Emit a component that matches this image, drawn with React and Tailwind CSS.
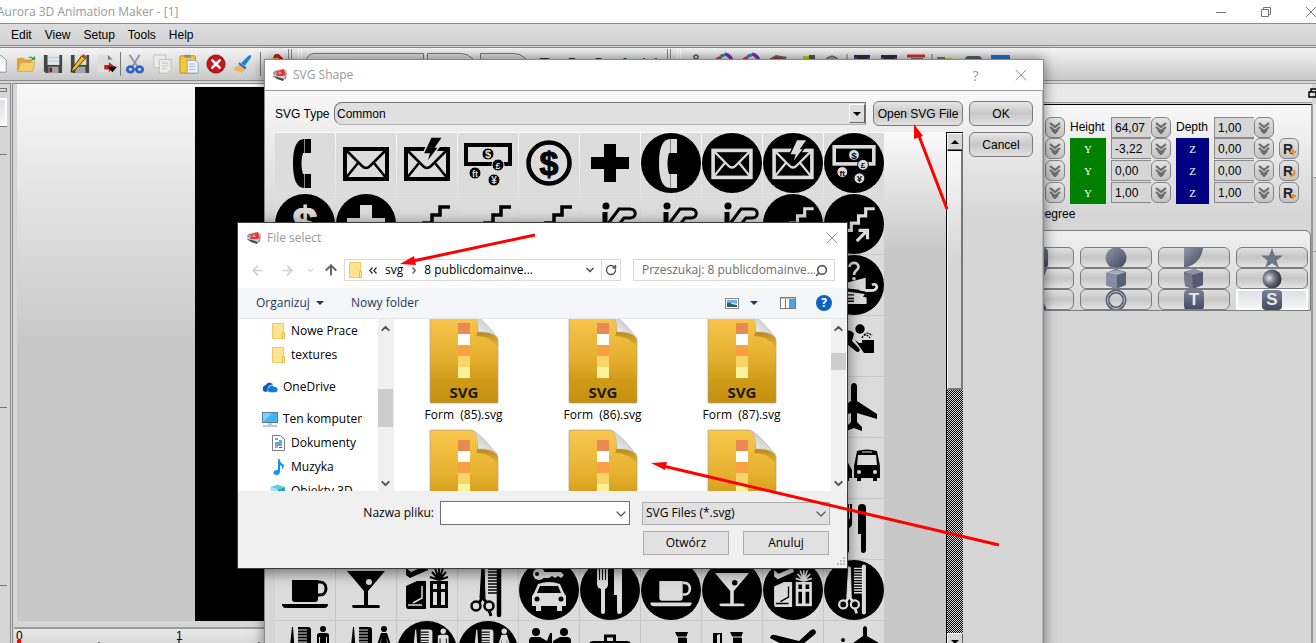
import React, { useState } from 'react';
import { ChevronDown, ChevronUp, ArrowLeft, ArrowRight, ArrowUp, RotateCw, Search, X } from 'lucide-react';

const INK = '#000000';
const PAPER = '#dcdcdc';

// 60x60 pictograms, f = figure colour, b = ground colour
const PICTOS = {
  phone: (f) => (
    <g fill={f}>
      <path d="M29 6C22 6 18 14 18 30.500C18 47 22 55 29 55V41H28C26 35 26 26 28 20H29Z" />
      <path d="M30 6H36V20H30ZM30 41H36V55H30Z" />
      <path d="M29.500 6V20M29.500 41V55" stroke="#888888" strokeWidth="1" />
    </g>
  ),
  mail: (f) => (
    <g fill="none" stroke={f}>
      <rect x="9" y="16" width="42" height="30" strokeWidth="4" />
      <path d="M9 16L26 33Q30 37 34 33L51 16M9 46L22 30M51 46L38 30" strokeWidth="2.500" />
    </g>
  ),
  flash: (f, b) => (
    <g>
      <g fill="none" stroke={f}>
        <rect x="9" y="16" width="42" height="30" strokeWidth="4" />
        <path d="M9 16L26 33Q30 37 34 33L51 16M9 46L22 30M51 46L38 30" strokeWidth="2.500" />
      </g>
      <path d="M34 4H46L39 14H42L29 31L32 21H26Z" fill={f} stroke={b} strokeWidth="1.500" />
    </g>
  ),
  money: (f, b) => (
    <g fontFamily="Liberation Sans, sans-serif" fontWeight="bold" textAnchor="middle">
      <rect x="8" y="12" width="44" height="19" fill="none" stroke={f} strokeWidth="4" />
      {[['$', 30, 21, 11], ['£', 40, 32, 9], ['ft', 17, 40, 9], ['¥', 36, 47, 10]].map(([t, x, y, s]) => (
        <g key={t}>
          <circle cx={x} cy={y} r="6" fill={f} stroke={b} strokeWidth="1" />
          <text x={x} y={y + 4} fontSize={s} fill={b}>{t}</text>
        </g>
      ))}
    </g>
  ),
  dollar: (f) => (
    <g>
      <circle cx="30" cy="30" r="20.500" fill="none" stroke={f} strokeWidth="4.500" />
      <text x="30" y="42" fontFamily="Liberation Sans, sans-serif" fontWeight="bold" fontSize="34" textAnchor="middle" fill={f} stroke={f}>$</text>
    </g>
  ),
  dollarSign: (f) => (
    <text x="30" y="46" fontFamily="Liberation Sans, sans-serif" fontWeight="bold" fontSize="46" textAnchor="middle" fill={f} stroke={f}>$</text>
  ),
  plus: (f) => <path d="M24 11H36V24H49V36H36V49H24V36H11V24H24Z" fill={f} />,
  stairs: (f) => (
    <g fill="none" stroke={f} strokeWidth="3.500">
      <path d="M53 13H43V21H35V29H27V37H19V45H8" />
      <path d="M33 49L44 38M35 37H45V47" />
    </g>
  ),
  escalator: (f) => (
    <g fill="none" stroke={f} strokeWidth="4">
      <circle cx="26" cy="12" r="3.500" fill={f} stroke="none" />
      <path d="M25 18V32" strokeWidth="5" />
      <path d="M27 31L39 15H50C57 15 57 24 50 24H44L29 43H14" strokeWidth="3" />
    </g>
  ),
  lost: (f, b) => (
    <g fill={f}>
      <path d="M25 10C25 4 35 4 35 10C35 14 30 13 30 19" fill="none" stroke={f} strokeWidth="3" />
      <circle cx="30" cy="23" r="2" />
      <path d="M4 32L43 22V38L52 37" />
      <path d="M36 36L52 36C58 33 55 27 50 30" fill="none" stroke={f} strokeWidth="3" />
      <path d="M14 36L42 40L40 43L44 44V51H18Z" />
      <path d="M12 33L42 38M22 41H30M22 45H30M22 48H30" stroke={b} strokeWidth="1.500" />
    </g>
  ),
  fountain: (f) => (
    <g fill={f}>
      <circle cx="36" cy="13" r="4.700" />
      <path d="M14 20C20 13 28 13 30 18L28 25L35 32Q37 36 33 36L24 29V36H14Z" />
      <path d="M31 24L35 27H38V24H50V37H40Z" />
      <path d="M38 22Q41 16 46 22M40 19Q44 15 48 20" fill="none" stroke={f} strokeWidth="1.300" strokeDasharray="2 1" />
    </g>
  ),
  plane: (f) => (
    <path d="M27 10Q27 6 30 6Q33 6 33 10V24L53 37V42L33 36V45L38 50V54L30 51L22 54V50L27 45V36L7 42V37L27 24Z" fill={f} />
  ),
  bus: (f, b) => (
    <g fill={f}>
      <path d="M33 13Q43 10 53 13L56 28V40H53V43H49V40H37V43H33V40H30V28Z" />
      <path d="M34 17H52L53 27H33Z" fill={b} />
      <circle cx="35" cy="34" r="2" fill={b} />
      <circle cx="51" cy="34" r="2" fill={b} />
      <path d="M38 14H48" stroke={b} />
      <path d="M5 32L9 23H23L28 32V40H25V43H22V40H10V43H6V40H4Z" />
    </g>
  ),
  cutlery: (f) => (
    <g fill={f}>
      <path d="M17 5H19V20H20V5H22V20H23V5H25V20H26V5H28V24Q28 28 25 29V52Q25 54 23 54Q21 54 21 52V29Q17 28 17 24Z" />
      <path d="M34 35V9Q34 5 38 5Q42 5 42 9V51Q42 54 39 54Q37 54 37 51V35Z" />
    </g>
  ),
  cup: (f) => (
    <g fill={f}>
      <path d="M17 20H43V39Q43 42 40 42H20Q17 42 17 39Z" />
      <path d="M43 22H45C53 22 53 35 45 35H43" fill="none" stroke={f} strokeWidth="3" />
      <path d="M7 44H53Q53 48 49 48H11Q7 48 7 44Z" />
    </g>
  ),
  martini: (f, b) => (
    <g fill={f}>
      <path d="M11 11H49L32 31V45H42Q44 45 44 47Q44 48 42 48H18Q16 48 16 46Q16 45 18 45H28V31Z" />
      <circle cx="33" cy="22" r="3" fill={b} />
    </g>
  ),
  gift: (f, b) => (
    <g fill={f}>
      <path d="M9 8L14 12L30 5L31 10L13 18L9 15Z" />
      <path d="M9 26L20 21H29V49H11Q9 49 9 45Z" />
      <path d="M25 26V38L16 43M11 45H25" fill="none" stroke={b} strokeWidth="1.500" />
      <path d="M33 21H51V48H33Z" />
      <path d="M36 24H40V29H36ZM44 24H48V29H44ZM36 32H40V45H36ZM44 32H48V45H44Z" fill={b} />
      <path d="M42 20V8M42 20L35 12M42 20L49 12M42 20L33 17M42 20L51 17M42 20L38 8M42 20L46 8" stroke={f} strokeWidth="2" />
    </g>
  ),
  scissors: (f) => (
    <g fill="none" stroke={f}>
      <path d="M24 4L22 38H27L26 5Z" fill={f} />
      <path d="M24 38L21 43M25 38L29 43M31 50L33 56" strokeWidth="3" />
      <circle cx="18" cy="46" r="4.500" strokeWidth="2.500" />
      <circle cx="31" cy="46" r="4.500" strokeWidth="2.500" />
      <path d="M41 4V55" strokeWidth="4.500" strokeLinecap="round" />
      <path d="M30 6H40M30 9H40M30 12H40M30 15H40M30 18H40M30 21H40M30 24H40M30 27H40M30 30H40M30 33H40" strokeWidth="1.500" />
    </g>
  ),
  carkey: (f, b) => (
    <g fill={f}>
      <circle cx="20" cy="14" r="6" />
      <path d="M24 12H42L45 15L42 18L39 16L36 18L33 16L30 18H24Z" />
      <circle cx="18" cy="14" r="2" fill={b} />
      <path d="M19 24Q30 20 41 24L45 33L47 36V46H43V51H38V46H22V51H17V46H13V36L15 33Z" />
      <path d="M21 26H39L42 33H18Z" fill={b} />
      <circle cx="18" cy="39" r="2.500" fill={b} />
      <circle cx="42" cy="39" r="2.500" fill={b} />
    </g>
  ),
  barber: (f, b) => (
    <g fill={f}>
      <path d="M17 6L14 34H20L18 6Z" />
      <path d="M23 6H33Q36 6 36 9V34H23Z" />
      <path d="M23 9H32M23 12H32M23 15H32M23 18H32M23 21H32" stroke={b} strokeWidth="1.200" />
      <circle cx="48" cy="8" r="3" />
      <path d="M42 14Q42 12 45 12H51Q54 12 54 14V28H52V16H51V40H45V16H44V28H42Z" />
    </g>
  ),
  salon: (f, b) => (
    <g fill={f}>
      <path d="M17 6L14 34H20L18 6Z" />
      <path d="M23 6H33Q36 6 36 9V34H23Z" />
      <path d="M23 9H32M23 12H32M23 15H32M23 18H32M23 21H32" stroke={b} strokeWidth="1.200" />
      <circle cx="48" cy="8" r="3" />
      <path d="M45 12H51L55 24L53 25L50 16L54 34H42L46 16L43 25L41 24Z" />
    </g>
  ),
  people: (f) => (
    <g fill={f}>
      <circle cx="17" cy="11" r="4" />
      <circle cx="45" cy="11" r="4" />
      <path d="M10 20Q10 16 14 16H21L28 20L31 12H33V22L22 24V40H10ZM52 20Q52 16 48 16H41L34 20V24L41 23V40H52Z" />
    </g>
  ),
  briefcase: (f) => (
    <g fill={f}>
      <path d="M25.500 20V15H34.500V20" fill="none" stroke={f} strokeWidth="3" />
      <path d="M9 24Q9 20 13 20H47Q51 20 51 24V46H9Z" />
    </g>
  ),
  officer: (f, b) => (
    <g fill={f}>
      <path d="M34 11H47L45 17H46V22Q41 28 37 22V17Z" />
      <path d="M36 16H47" stroke={b} />
      <path d="M32 28H50V50H32Z" />
    </g>
  ),
  customs: (f, b) => (
    <g fill={f}>
      <path d="M11 12H20V40H11Z" />
      <path d="M15 14L18 13V40H15Z" fill={b} />
      <path d="M28 11H41L39 17H40V22Q35 28 31 22V17Z" />
      <path d="M30 16H41" stroke={b} />
      <path d="M26 28H44V50H26Z" />
    </g>
  ),
  takeoff: (f) => (
    <path d="M7 17Q8 13 12 14L36 20L48 9Q52 7 53 11Q53 13 50 15L24 36L12 34L22 25Z" fill={f} />
  ),
  landing: (f) => (
    <g fill={f}>
      <path d="M39 7Q41 3 43 7V15L55 22V28L41 25L29 28V22L39 15Z" />
      <circle cx="19" cy="19" r="2" />
    </g>
  ),
};

// these keep their full size inside the disc
const FULL_SIZE = ['phone', 'plus', 'dollarSign', 'cutlery', 'carkey'];

// a leading "o" marks the reversed, round version
const ROWS = [
  ['phone', 'mail', 'flash', 'money', 'dollar', 'plus', 'o phone', 'o mail', 'o flash', 'o money'],
  ['o dollarSign', 'o plus', 'stairs', 'stairs', 'stairs', 'escalator', 'escalator', 'escalator', 'o stairs', 'o stairs'],
  ['o stairs', 'o escalator', 'o escalator', 'o escalator', 'lost', 'lost', 'lost', 'o lost', 'o lost', 'o lost'],
  ['fountain', 'fountain', 'o fountain', 'mail', 'phone', 'o phone', 'plus', 'o plus', 'fountain', 'fountain'],
  ['plane', 'bus', 'o plane', 'o bus', 'plane', 'bus', 'o plane', 'o bus', 'bus', 'plane'],
  ['plane', 'bus', 'o plane', 'o bus', 'plane', 'bus', 'o plane', 'o bus', 'plane', 'bus'],
  ['o bus', 'o plane', 'carkey', 'o plane', 'plane', 'bus', 'o plane', 'o bus', 'carkey', 'cutlery'],
  ['cup', 'martini', 'gift', 'scissors', 'o carkey', 'o cutlery', 'o cup', 'o martini', 'o gift', 'o scissors'],
  ['barber', 'salon', 'o barber', 'o salon', 'people', 'briefcase', 'officer', 'customs', 'takeoff', 'landing'],
];

const Picto = ({ id }) => {
  const round = id.startsWith('o ');
  const name = round ? id.slice(2) : id;
  return (
    <button type="button" aria-label={name} className="block h-[60px] w-[60px] bg-[#dcdcdc]">
      <svg viewBox="0 0 60 60" className="block h-[60px] w-[60px]">
        {round && <circle cx="30" cy="30" r="30" fill={INK} />}
        {round ? (
          <g transform={FULL_SIZE.includes(name) ? undefined : 'translate(3 3) scale(0.9)'}>{PICTOS[name](PAPER, INK)}</g>
        ) : (
          PICTOS[name](INK, PAPER)
        )}
      </svg>
    </button>
  );
};

const AppLogo = () => (
  <svg viewBox="0 0 16 16" className="h-4 w-4 shrink-0">
    <path d="M1 6L4 3L9 2L15 3L14 12L11 14L6 12L1 10Z" fill="#d4d4d4" />
    <path d="M4 9L5 4L12 2L14 8L11 9Z" fill="#e2363c" />
    <path d="M6 7L8 4L10 7Z" fill="#ff9a9d" />
    <path d="M1 6L4 3L5 5L2 8Z" fill="#8e8e8e" />
    <path d="M1 9L6 10L12 12L11 14L5 12Z" fill="#4a4a4a" />
    <path d="M13 9L15 3L14 12L12 12Z" fill="#9a9a9a" />
  </svg>
);

/* Main toolbar */

const toolIcons = {
  New: <path d="M3 2H14L19 7V20H3Z" fill="#f6f8fb" stroke="#8290a8" />,
  Open: (
    <g>
      <path d="M1 6Q1 4 3 4H8L10 6H17V19H3Q1 19 1 17Z" fill="#d9a63c" />
      <path d="M5 9H21L18 19H2Z" fill="#f7cf6b" stroke="#c99632" strokeWidth=".6" />
      <path d="M13 5Q15 1 19 4L21 2V7H16L18 5Q16 3 13 5Z" fill="#35a23a" />
    </g>
  ),
  Save: (
    <g>
      <path d="M1 1H21V21H3L1 19Z" fill="#454545" />
      <rect x="5" y="1" width="13" height="11" fill="#dfe9f0" />
      <path d="M5 4H18M5 8H18" stroke="#b8c6d0" />
      <rect x="6" y="14" width="11" height="7" fill="#a5a5a5" />
      <rect x="7" y="15" width="3" height="5" fill="#6d2020" />
    </g>
  ),
  'Save as': (
    <g>
      <path d="M1 1H21V21H3L1 19Z" fill="#454545" />
      <rect x="5" y="1" width="13" height="11" fill="#e2ddd0" />
      <rect x="6" y="14" width="11" height="7" fill="#a5a5a5" />
      <path d="M1 20L3 15L13 2L17 5L6 17Z" fill="#f0b91e" stroke="#2c2410" />
      <path d="M13 2L15 0L18 3L17 5Z" fill="#cf3329" />
    </g>
  ),
  Export: (
    <g>
      <path d="M1 1H12L17 6V20H1Z" fill="#dedede" />
      <path d="M12 1L17 6H12Z" fill="#777777" />
      <path d="M8 12H13V9L20 14L13 20V17H8Z" fill="#c01f22" />
      <path d="M12 14H22L17 20Z" fill="#000000" />
    </g>
  ),
  Cut: (
    <g fill="none">
      <path d="M5 1L14 14M16 1L8 14" stroke="#8996a6" strokeWidth="2" />
      <ellipse cx="6" cy="17" rx="3.500" ry="3" stroke="#2d62c8" strokeWidth="3" />
      <ellipse cx="16" cy="17" rx="3.500" ry="3" stroke="#2d62c8" strokeWidth="3" />
    </g>
  ),
  Copy: (
    <g fill="#ececea" stroke="#bdbdba">
      <path d="M2 1H15V15H2Z" />
      <path d="M8 6H21V17L17 21H8Z" />
      <path d="M11 10H18M11 13H18M11 16H16" />
    </g>
  ),
  Paste: (
    <g>
      <rect x="1" y="2" width="17" height="19" rx="1" fill="#f5c836" stroke="#b98a14" />
      <rect x="6" y="1" width="7" height="3" fill="#8a8a8a" />
      <path d="M9 7H18L21 10V21H9Z" fill="#eef3fb" stroke="#8ea0bc" />
      <path d="M11 11H18M11 14H18M11 17H18" stroke="#9fb4d6" />
    </g>
  ),
  Delete: (
    <g>
      <circle cx="11" cy="11" r="10" fill="#c4161c" stroke="#8e0d12" />
      <path d="M7 7L15 15M15 7L7 15" stroke="#ffffff" strokeWidth="3" strokeLinecap="round" />
    </g>
  ),
  Brush: (
    <g>
      <path d="M19 1Q21 2 19 5L13 13L9 10L17 2Z" fill="#1f7fd0" />
      <path d="M7 9L15 15L13 17L6 11Z" fill="#2d6aa8" />
      <path d="M6 12L13 17L10 21L7 19L6 21L4 18L2 19L1 16Z" fill="#f5b25c" />
    </g>
  ),
  Pencil: (
    <g>
      <path d="M11 0H15L20 5L17 8Z" fill="#c9191c" />
      <path d="M1 16L11 1L17 7L10 18Z" fill="#e9a62b" />
      <path d="M9 4L11 0L14 4Z" fill="#a31313" />
    </g>
  ),
};

const Tool = ({ name }) => (
  <button type="button" aria-label={name} className="flex h-[27px] w-[27px] shrink-0 items-center justify-center">
    <svg viewBox="0 0 22 22" className="h-[20px] w-[20px]">{toolIcons[name]}</svg>
  </button>
);

const Divider = () => <span className="h-6 w-px shrink-0 bg-[#777777]" />;

const Grip = () => (
  <span className="flex h-full shrink-0 gap-[2px] pt-px">
    <span className="w-px bg-[#8b8b8b]" />
    <span className="w-px bg-[#8b8b8b]" />
    <span className="ml-1 w-px bg-white" />
    <span className="w-px bg-white" />
  </span>
);

const MoreTools = () => (
  <svg viewBox="0 0 352 24" className="ml-1 h-6 w-[352px] shrink-0" fill="none">
    <circle cx="11" cy="5" r="2" stroke="#555555" strokeWidth="1.500" />
    <path d="M11 7V20" stroke="#555555" strokeWidth="2" />
    <path d="M31 10Q39 -3 47 8" stroke="#2a83c4" strokeWidth="3" strokeDasharray="5 2" />
    <path d="M40 2Q45 3 47 8" stroke="#7d2bb5" strokeWidth="3" />
    <path d="M31 8L36 5" stroke="#cf4343" strokeWidth="3" />
    <path d="M58 10Q66 -3 74 8" stroke="#2a83c4" strokeWidth="3" strokeDasharray="5 2" />
    <path d="M67 2Q72 3 74 8" stroke="#7d2bb5" strokeWidth="3" />
    <path d="M58 8L63 5" stroke="#cf4343" strokeWidth="3" />
    <path d="M84 7L91 3L102 5L96 14Z" fill="#666666" />
    <path d="M84 8L92 5L100 8L92 14Z" fill="#cf2626" />
    <path d="M118 4H130V16H118Z" fill="#a8de18" />
    <path d="M124 3H130V16H124Z" fill="#555555" />
    <path d="M138 12Q147 -3 156 12" stroke="#777777" strokeWidth="2" />
    <circle cx="147" cy="9" r="3" fill="#888888" />
    <path d="M162 2V22" stroke="#777777" />
    <path d="M169 3H185V7H180V20H174V7H169Z" fill="#303040" />
    <path d="M169 7H172M182 7H185M177 7V20" stroke="#8a2bc2" strokeWidth="3" />
    <path d="M196 3H212V7H207V20H201V7H196Z" fill="#303040" />
    <path d="M196 7H199M209 7H212M204 7V20" stroke="#8a2bc2" strokeWidth="3" />
    <path d="M222 4H240" stroke="#cf3131" strokeWidth="3" />
    <path d="M226 8H238" stroke="#777777" strokeWidth="4" />
    <path d="M247 2V22" stroke="#777777" />
    <path d="M252 5H260V12H252Z" fill="#777777" />
    <path d="M260 6H267V12H260Z" fill="#d8d020" />
    <rect x="280" y="4" width="17" height="14" rx="4" fill="#5d6272" />
    <rect x="306" y="3" width="19" height="15" fill="#cf3153" />
    <rect x="306" y="3" width="19" height="4" fill="#2673d6" />
  </svg>
);

const Toolbar = () => (
  <div className="flex h-[34px] shrink-0 items-center overflow-hidden border-t border-b border-[#8b8b8b] bg-linear-to-b from-[#f4f4f4] to-[#c8c8c8]">
    <div className="-ml-[15px] flex items-center">
      <Tool name="New" />
      <Tool name="Open" />
      <Tool name="Save" />
      <Tool name="Save as" />
      <Tool name="Export" />
      <Divider />
      <Tool name="Cut" />
      <Tool name="Copy" />
      <Tool name="Paste" />
      <Tool name="Delete" />
      <Tool name="Brush" />
      <span className="w-1" />
      <Divider />
      <Tool name="Pencil" />
    </div>
    <Grip />
    <div className="ml-1 flex h-full shrink-0 items-start gap-[3px] pt-[5px]">
      <span className="h-5 w-[118px] rounded-tl-lg border border-[#777777] bg-[#dedede]" />
      <span className="h-5 w-[50px] rounded-tr-2xl border border-[#777777] bg-[#dedede]" />
      <span className="h-5 w-[50px] rounded-tr-2xl border border-[#777777] bg-[#dedede]" />
      <div className="grid grid-cols-[repeat(5,26px)] justify-items-center font-['Liberation_Serif',serif] text-xl leading-6 font-bold text-[#333333]">
        <button type="button">B</button>
        <button type="button">I</button>
        <button type="button">S</button>
        <button type="button" className="italic">A</button>
        <button type="button" aria-label="Clear"><X className="h-6 w-6" /></button>
      </div>
    </div>
    <span className="w-1" />
    <Grip />
    <MoreTools />
  </div>
);

/* Right hand panel */

const Spinner = ({ label }) => (
  <button type="button" aria-label={label} className="flex h-[21px] w-5 items-center justify-center rounded-md border border-[#858585] bg-linear-to-b from-[#e4e4e4] to-[#c4c4c4]">
    <svg viewBox="0 0 12 12" className="h-3 w-3" fill="none" stroke="#6d6d6d" strokeWidth="2.200">
      <path d="M1 1L6 5L11 1M1 5L6 9L11 5M3 8L6 11L9 8" />
    </svg>
  </button>
);

const Field = ({ id, label, value }) => {
  const [text, setText] = useState(value);
  return (
    <div className="flex h-[21px]">
      <input
        id={id}
        aria-label={label}
        value={text}
        onChange={(e) => setText(e.target.value)}
        className="w-10 border-t border-b border-l border-[#8b8b8b] bg-[#d6d6d6] pl-[3px] text-[12px] focus:outline-none"
      />
      <Spinner label={`${label} steps`} />
    </div>
  );
};

const transforms = [
  { name: 'Position', y: '-3,22', z: '0,00', mark: 'M13 10V16M10 13H16' },
  { name: 'Rotation', y: '0,00', z: '0,00', mark: 'M10 15Q16 15 14 9' },
  { name: 'Scale', y: '1,00', z: '1,00', mark: 'M13 11V16M11 13H16' },
];

const TransformFields = () => (
  <div className="grid grid-cols-[20px_36px_60px_33px_60px_20px] justify-end gap-x-[5px] pr-3 pt-3 text-[12px] leading-5">
    <div className="h-[21px]"><Spinner label="Width steps" /></div>
    <label htmlFor="height">Height</label>
    <Field id="height" label="Height" value="64,07" />
    <label htmlFor="depth">Depth</label>
    <Field id="depth" label="Depth" value="1,00" />
    <span />
    {transforms.map((t) => (
      <React.Fragment key={t.name}>
        <div className="h-[22px]"><Spinner label={`${t.name} X steps`} /></div>
        <span className="flex items-center justify-center bg-[#008000] font-['Liberation_Serif',serif] text-[11px] text-white">Y</span>
        <Field id={`${t.name}-y`} label={`${t.name} Y`} value={t.y} />
        <span className="flex items-center justify-center bg-[#000080] font-['Liberation_Serif',serif] text-[11px] text-white">Z</span>
        <Field id={`${t.name}-z`} label={`${t.name} Z`} value={t.z} />
        <button type="button" className="relative flex h-[21px] w-5 items-center justify-start rounded-md border border-[#858585] bg-linear-to-b from-[#e4e4e4] to-[#c4c4c4] pl-[3px] text-[14px] font-bold text-[#222222]">
          R
          <svg viewBox="0 0 18 18" className="absolute inset-0 h-[18px] w-[18px]">
            <path d={t.mark} fill="none" stroke="#f08a24" strokeWidth="2" />
          </svg>
        </button>
      </React.Fragment>
    ))}
  </div>
);

const shapeIcons = {
  Rectangle: <rect x="1" y="0" width="20" height="20" rx="4" fill="url(#steel)" />,
  Circle: <circle cx="11" cy="10" r="10.500" fill="url(#steel)" />,
  Pie: <path d="M1 0H20Q18 16 1 20Z" fill="url(#steel)" />,
  Star: <path d="M11 0L13.800 7.500H22L15.500 12.500L18 20L11 15.300L4 20L6.500 12.500L0 7.500H8.200Z" fill="#6f7784" />,
  Cone: <path d="M1 0H20L12 20H8Z" fill="url(#steel)" />,
  Cube: (
    <g>
      <path d="M1 4L11 0L21 3V16L11 20L1 16Z" fill="#596177" />
      <path d="M1 4L12 6V20L1 16Z" fill="#858ca3" />
      <path d="M1 4L11 1L21 3L12 6Z" fill="#a7adbd" />
    </g>
  ),
  Box: (
    <g>
      <path d="M1 3L11 0L20 3V16L10 20L2 17Z" fill="#565c70" />
      <path d="M1 4L9 6L10 20L2 17Z" fill="#737a8e" />
      <path d="M1 3L11 0L20 3L9 6Z" fill="#8d94a5" />
    </g>
  ),
  Sphere: <circle cx="11" cy="10" r="9.500" fill="url(#ball)" />,
  Pyramid: <path d="M11 0L20 20H1Z" fill="url(#steel)" />,
  Ring: (
    <g fill="none">
      <circle cx="11" cy="10" r="8.500" stroke="#525a6e" strokeWidth="4" />
      <circle cx="11" cy="10" r="8.500" stroke="#c5cad6" strokeWidth="1" />
    </g>
  ),
  Text: 'T',
  SVG: 'S',
};

const ShapeButton = ({ name, active }) => (
  <button
    type="button"
    aria-label={name}
    className={
      active
        ? 'flex h-[21px] w-[72px] items-center justify-center border-2 border-white bg-linear-to-b from-[#dfe0e4] to-[#f4f5f8]'
        : 'flex h-[21px] w-[72px] items-center justify-center overflow-hidden rounded-md border border-[#7c7c7c] bg-linear-to-b from-[#e0e0e0] via-[#c6c6c6] to-[#e4e4e4]'
    }
  >
    {typeof shapeIcons[name] === 'string' ? (
      <span className="flex h-5 w-5 items-center justify-center rounded bg-linear-to-b from-[#7a8096] to-[#434a5e] text-[17px] leading-5 font-bold text-[#e8e8ec]">
        {shapeIcons[name]}
      </span>
    ) : (
      <svg viewBox="0 0 22 20" className="h-5 w-[22px]">
        <defs>
          <linearGradient id="steel" x1="0" y1="0" x2="1" y2="1">
            <stop offset="0" stopColor="#9298ab" />
            <stop offset="1" stopColor="#3d4459" />
          </linearGradient>
          <radialGradient id="ball" cx=".35" cy=".45" r=".65">
            <stop offset="0" stopColor="#dfe3ea" />
            <stop offset=".5" stopColor="#69717f" />
            <stop offset="1" stopColor="#2b313c" />
          </radialGradient>
        </defs>
        {shapeIcons[name]}
      </svg>
    )}
  </button>
);

const PropertyPanel = () => (
  <aside className="flex w-[356px] shrink-0 border-t border-[#9a9a9a]">
    <div className="flex min-w-0 flex-1 flex-col">
      <div className="flex h-[19px] shrink-0 border-b border-[#9a9a9a] bg-[#e9e9e9]" />
      <div className="mt-px flex flex-1 flex-col border-t border-r border-t-black border-r-[#9a9a9a] bg-[linear-gradient(#f8f8f8,#d6d6d6_110px)]">
        <TransformFields />
        <div className="pl-[76px] text-[12px] leading-5">Degree</div>
        <div className="mt-[6px] rounded-tr-md border border-[#7c7c7c] bg-linear-to-b from-[#efefef] to-[#d6d6d6] pt-4 pr-[2px]">
          <div className="grid grid-cols-[repeat(4,72px)] justify-end gap-x-[6px]">
            {Object.keys(shapeIcons).map((name) => (
              <ShapeButton key={name} name={name} active={name === 'SVG'} />
            ))}
          </div>
        </div>
      </div>
    </div>
    <div className="flex w-1 flex-col">
      <svg viewBox="0 0 8 10" className="mt-1 -ml-1 h-[10px] w-2" fill="none" stroke="#000000" strokeWidth="1.500">
        <path d="M3 4V1H10M1 4H8V9H1Z" />
      </svg>
      <div className="mt-[6px] h-[74px] border-b border-l border-[#9a9a9a] bg-[#e9e9e9]" />
      <div className="h-[74px] border-b border-l border-[#9a9a9a]" />
      <div className="flex-1 border-l border-[#9a9a9a]" />
    </div>
  </aside>
);

/* SVG Shape window */

const QtButton = ({ children, className }) => (
  <button type="button" className={`h-[25px] rounded-md border border-[#7c7c7c] bg-linear-to-b from-[#e6e6e6] via-[#c8c8c8] to-[#e2e2e2] text-[12px] ${className}`}>
    {children}
  </button>
);

const ScrollArrow = ({ up }) => (
  <button
    type="button"
    aria-label={up ? 'Scroll up' : 'Scroll down'}
    className="flex h-[17px] shrink-0 items-center justify-center border border-t-white border-r-[#666666] border-b-[#666666] border-l-white bg-[#d6d6d6]"
  >
    <svg viewBox="0 0 8 4" className="h-1 w-2">
      <path d={up ? 'M4 0L8 4H0Z' : 'M0 0H8L4 4Z'} />
    </svg>
  </button>
);

const ShapeDialog = () => (
  <section className="absolute top-[59px] -bottom-2 left-[264px] flex w-[780px] flex-col border border-[#8b8b8b] bg-[linear-gradient(#f8f8f8_31px,#d6d6d6_160px)] shadow-[0_0_12px_rgba(0,0,0,0.5)]">
    <header className="flex h-[31px] shrink-0 items-center border-b border-[#9a9a9a] bg-white pl-[7px] font-['Open_Sans',sans-serif] text-[12px] text-[#999999]">
      <AppLogo />
      <h2 className="ml-[5px] flex-1">SVG Shape</h2>
      <button type="button" className="w-[45px] text-[14px]">?</button>
      <button type="button" aria-label="Close" className="flex w-[45px] justify-center">
        <X className="h-5 w-5" strokeWidth={1.2} />
      </button>
    </header>
    <div className="flex min-h-0 flex-1 gap-[6px] border-r border-[#b5b5b5] pt-[10px] pr-[9px] pl-[10px]">
      <div className="flex min-w-0 flex-1 flex-col gap-[6px]">
        <div className="flex items-center">
          <label htmlFor="svg-type" className="w-[59px] text-[12px]">SVG Type</label>
          <div className="relative h-[23px] flex-1">
            <select id="svg-type" className="block h-full w-full appearance-none rounded-l-lg border border-t-[#777777] border-r-[#777777] border-b-[#b0b0b0] border-l-[#777777] bg-[#e0e0e0] pl-[2px] text-[12px]">
              <option>Common</option>
            </select>
            <span className="pointer-events-none absolute top-[2px] right-px flex h-[19px] w-4 items-center justify-center border border-t-white border-r-[#666666] border-b-[#666666] border-l-white bg-[#dedede]">
              <svg viewBox="0 0 8 4" className="h-1 w-2"><path d="M0 0H8L4 4Z" /></svg>
            </span>
          </div>
          <QtButton className="ml-[7px] w-[90px]">Open SVG File</QtButton>
        </div>
        <div className="flex min-h-0 flex-1">
          <div className="min-w-0 flex-1 overflow-hidden bg-[linear-gradient(#fafafa,#c8c8c8_120px)] pt-px">
            <div className="grid grid-cols-[repeat(10,60px)] gap-px">
              {ROWS.flat().map((id, i) => (
                <Picto key={i} id={id} />
              ))}
            </div>
          </div>
          <div className="flex w-[17px] flex-col border-t border-l border-black bg-[repeating-conic-gradient(#000_0_25%,#d6d6d6_0_50%)] bg-[length:2px_2px]">
            <ScrollArrow up />
            <div className="h-[240px] shrink-0 border-t border-r-2 border-b-2 border-l border-t-black border-r-[#777777] border-b-[#777777] border-l-white bg-[linear-gradient(#fafafa,#d6d6d6_110px)]" />
            <div className="flex-1" />
            <ScrollArrow />
          </div>
        </div>
      </div>
      <div className="flex w-16 flex-col gap-[6px]">
        <QtButton className="w-full">OK</QtButton>
        <QtButton className="w-full">Cancel</QtButton>
      </div>
    </div>
  </section>
);

/* File select window */

const FolderIcon = ({ className }) => (
  <svg viewBox="0 0 13 16" className={`shrink-0 ${className}`}>
    <path d="M.5 .5H11.500V15.500H.5Z" fill="#ffe391" stroke="#eecb5e" />
    <path d="M10.500 9.500H12.500V15.500H10.500Z" fill="#ffe9a8" stroke="#e3bb48" />
  </svg>
);

const treeIcons = {
  folder: <FolderIcon className="h-4 w-[13px]" />,
  cloud: (
    <svg viewBox="0 0 17 12" className="h-3 w-4">
      <path d="M1 9Q0 5 4 4Q6 0 10 2L12 3Q5 4 6 11H3Q1 11 1 9Z" fill="#0b5fb8" />
      <path d="M7 11Q5 8 8 6Q10 3 13 6Q17 6 16.500 9.500Q16 11.500 14 11.500H8Z" fill="#0f7bdc" />
    </svg>
  ),
  computer: (
    <svg viewBox="0 0 16 15" className="h-[15px] w-4">
      <rect x=".5" y=".5" width="15" height="10" fill="#45b4f5" stroke="#5a7f9c" />
      <path d="M1 10L10 1H1Z" fill="#7fd0fb" />
      <path d="M6 12H10M1 14H15" stroke="#7a93a8" />
    </svg>
  ),
  document: (
    <svg viewBox="0 0 13 16" className="h-4 w-[13px]" fill="none">
      <path d="M.5 .5H8.500L12.500 4V15.500H.5Z" fill="#ffffff" stroke="#7d7d7d" />
      <path d="M3 4H6M7 6H10M3 8H10M3 10H10" stroke="#2e8fd6" strokeWidth="1.300" />
      <path d="M3 12H6M7 12.500H10" stroke="#555555" />
    </svg>
  ),
  music: (
    <svg viewBox="0 0 13 16" className="h-4 w-[13px]">
      <path d="M6 0H7.500Q8 4 12 6Q12 9 10 10Q11 7 8 6V12Q8 16 4.500 16Q1 15.500 1.500 13Q2.500 10.500 6 11Z" fill="#0d96ee" />
    </svg>
  ),
  cube: (
    <svg viewBox="0 0 16 16" className="h-4 w-[13px] overflow-visible">
      <path d="M-2 3L7 0L16 3L7 6Z" fill="#5fcfe0" />
      <path d="M-2 3L7 6V16L-2 13Z" fill="#9fe4ee" />
      <path d="M16 3L7 6V16L16 13Z" fill="#20a8c4" />
    </svg>
  ),
};

const TreeItem = ({ icon, children, root }) => (
  <li className={root ? 'flex h-6 items-center gap-[5px] pl-6' : 'flex h-6 items-center gap-[6px] pl-[34px]'}>
    {treeIcons[icon]}
    <span className="whitespace-nowrap">{children}</span>
  </li>
);

const FileIcon = () => (
  <svg viewBox="0 0 70 92" className="h-[92px] w-[70px]">
    <defs>
      <linearGradient id="gold" x1="0" y1="0" x2="0" y2="1">
        <stop offset="0" stopColor="#f9c84e" />
        <stop offset=".5" stopColor="#e6b02f" />
        <stop offset=".75" stopColor="#cf9b17" />
        <stop offset="1" stopColor="#c4900f" />
      </linearGradient>
      <linearGradient id="curl" x1="0" y1="1" x2=".6" y2=".3">
        <stop offset="0" stopColor="#ffffff" />
        <stop offset="1" stopColor="#c9c9c9" />
      </linearGradient>
      <linearGradient id="curlShade" x1=".5" y1="0" x2=".5" y2="1">
        <stop offset="0" stopColor="#9a6f00" stopOpacity=".7" />
        <stop offset="1" stopColor="#9a6f00" stopOpacity="0" />
      </linearGradient>
    </defs>
    <path d="M1 2Q1 1 2 1H42C48 2 49 9 49 20C60 20 67 22 69 28V90Q69 91 68 91H2Q1 91 1 90Z" fill="url(#gold)" stroke="#a8a08a" strokeWidth=".7" />
    <path d="M49 19C60 19 67 22 68.500 28V36Q62 24 47 24Z" fill="url(#curlShade)" />
    <path d="M43 1Q50 3 69 26Q62 19 49 20Q49 5 43 1Z" fill="url(#curl)" stroke="#b5b5b5" strokeWidth=".6" />
    <rect x="29" y="11" width="12" height="11" fill="#e98a55" />
    <rect x="29" y="22" width="12" height="11" fill="#ffffff" />
    <rect x="29" y="33" width="12" height="11" fill="#f9a142" />
    <rect x="29" y="44" width="12" height="11" fill="#f7d56a" />
    <rect x="29" y="55" width="12" height="11" fill="#f9f29a" />
    <text x="35" y="86" textAnchor="middle" fontFamily="Open Sans, sans-serif" fontWeight="700" fontSize="15" fill="#1d1a10">SVG</text>
  </svg>
);

const WinScroll = ({ thumb }) => (
  <div className="flex w-[15px] shrink-0 flex-col items-center bg-[#f0f0f0] text-[#505050]">
    <ChevronUp className="mt-[3px] h-[13px] w-[13px] shrink-0" strokeWidth={3.5} />
    <div className={thumb} />
    <div className="flex-1" />
    <ChevronDown className="mb-px h-[13px] w-[13px] shrink-0" strokeWidth={3.5} />
  </div>
);

const files = ['Form  (85).svg', 'Form  (86).svg', 'Form  (87).svg', 'Form  (88).svg', 'Form  (89).svg', 'Form  (90).svg'];

const FileDialog = () => {
  const [fileName, setFileName] = useState('');
  return (
    <section className="absolute top-[222px] left-[237px] flex w-[611px] flex-col border border-[#3c3c3c] bg-white font-['Open_Sans',sans-serif] text-[12px] shadow-[0_3px_14px_rgba(0,0,0,0.55)]">
      <header className="flex h-[30px] items-center pl-2 text-[#999999]">
        <AppLogo />
        <h2 className="ml-[5px] flex-1">File select</h2>
        <button type="button" aria-label="Close" className="flex w-[30px] justify-center">
          <X className="h-5 w-5" strokeWidth={1.2} />
        </button>
      </header>

      <nav className="flex h-[35px] items-center pr-3 pb-px pl-3">
        <button type="button" aria-label="Back" className="w-[30px] text-[#d0d0d0]"><ArrowLeft className="h-[15px] w-[15px]" strokeWidth={2.5} /></button>
        <button type="button" aria-label="Forward" className="w-[30px] text-[#d0d0d0]"><ArrowRight className="h-[15px] w-[15px]" strokeWidth={2.5} /></button>
        <button type="button" aria-label="Recent" className="w-[13px] text-[#d0d0d0]"><ChevronDown className="-ml-1 h-[9px] w-[9px]" strokeWidth={3} /></button>
        <button type="button" aria-label="Up" className="w-[21px] text-[#666666]"><ArrowUp className="h-4 w-4" strokeWidth={3} /></button>
        <div className="flex h-[22px] w-[277px] items-center border border-[#d9d9d9] pl-1">
          <FolderIcon className="h-4 w-[13px]" />
          <svg viewBox="0 0 8 7" className="ml-[7px] h-[7px] w-2" fill="none" stroke="#222222" strokeWidth="1.200">
            <path d="M3.500 .5L.8 3.500L3.500 6.500M7.500 .5L4.800 3.500L7.500 6.500" />
          </svg>
          <span className="ml-2">svg</span>
          <svg viewBox="0 0 4 7" className="mr-2 ml-[9px] h-[7px] w-1" fill="none" stroke="#666666" strokeWidth="1.500">
            <path d="M.5 .5L3.200 3.500L.5 6.500" />
          </svg>
          <span className="flex-1 whitespace-nowrap">8 publicdomainve...</span>
          <ChevronDown className="mr-[5px] h-3 w-3 text-[#555555]" strokeWidth={3.5} />
          <button type="button" aria-label="Refresh" className="flex h-full w-[19px] items-center justify-center border-l border-[#d9d9d9] text-[#555555]">
            <RotateCw className="h-3 w-3" strokeWidth={2.8} />
          </button>
        </div>
        <div className="ml-3 flex h-[22px] flex-1 items-center border border-[#d9d9d9] pr-[6px] pl-2">
          <input aria-label="Przeszukaj" placeholder="Przeszukaj: 8 publicdomainve..." className="min-w-0 flex-1 placeholder:text-[#6d6d6d] focus:outline-none" />
          <Search className="h-[13px] w-[13px] -scale-x-100 text-[#555555]" strokeWidth={3} />
        </div>
      </nav>

      <div className="flex h-[31px] items-center border-b border-[#e3e5e8] bg-[#f4f6f8] pr-[15px] pl-[18px] text-[#1e395b]">
        <button type="button" className="flex w-[95px] items-center gap-[6px]">
          Organizuj
          <svg viewBox="0 0 8 4" className="h-1 w-2"><path d="M0 0H8L4 4Z" fill="#1e395b" /></svg>
        </button>
        <button type="button">Nowy folder</button>
        <div className="flex flex-1 items-center justify-end">
          <button type="button" aria-label="View" className="flex items-center gap-[11px]">
            <svg viewBox="0 0 14 11" className="h-[11px] w-[14px]">
              <rect x=".5" y=".5" width="13" height="10" fill="#ffffff" stroke="#8a8a8a" />
              <path d="M2 2H12V6L7 5L2 7Z" fill="#6eb2ea" />
              <path d="M2 5Q5 4 7 6L12 7V9H2Z" fill="#2b5d74" />
            </svg>
            <svg viewBox="0 0 8 4" className="h-1 w-2"><path d="M0 0H8L4 4Z" fill="#1e395b" /></svg>
          </button>
          <button type="button" aria-label="Preview pane" className="ml-[22px]">
            <svg viewBox="0 0 16 12" className="h-3 w-4">
              <rect x=".5" y=".5" width="15" height="11" fill="#ffffff" stroke="#7a7a7a" />
              <path d="M1 1H15M5.500 2V11" stroke="#7a7a7a" />
              <rect x="9" y="2" width="6" height="9" fill="#4aa3e6" />
            </svg>
          </button>
          <button type="button" className="ml-5 h-4 w-4 rounded-full bg-[#0a63c0] text-[12px] leading-4 font-bold text-white">?</button>
        </div>
      </div>

      <div className="flex h-[172px] overflow-hidden pr-px">
        <ul className="w-[140px] shrink-0">
          <TreeItem icon="folder">Nowe Prace</TreeItem>
          <TreeItem icon="folder">textures</TreeItem>
          <li className="h-2" />
          <TreeItem icon="cloud" root>OneDrive</TreeItem>
          <li className="h-2" />
          <TreeItem icon="computer" root>Ten komputer</TreeItem>
          <TreeItem icon="document">Dokumenty</TreeItem>
          <TreeItem icon="music">Muzyka</TreeItem>
          <TreeItem icon="cube">Obiekty 3D</TreeItem>
        </ul>
        <WinScroll thumb="mt-[54px] h-[38px] w-full shrink-0 bg-[#cdcdcd]" />
        <ul className="-mt-[7px] grid flex-1 grid-cols-[repeat(3,139px)] content-start border-l border-[#f0f0f0]">
          {files.map((name) => (
            <li key={name} className="flex h-[117px] flex-col items-center">
              <FileIcon />
              <span className="mt-px leading-5 whitespace-pre">{name}</span>
            </li>
          ))}
        </ul>
        <WinScroll thumb="mt-[18px] h-[17px] w-full shrink-0 bg-[#cdcdcd]" />
      </div>

      <footer className="relative flex h-[77px] flex-col gap-[6px] bg-[#f0f0f0] pt-[10px] pr-[17px]">
        <div className="flex items-center justify-end">
          <label htmlFor="file-name" className="mr-[6px]">Nazwa pliku:</label>
          <div className="relative h-6 w-[190px]">
            <input
              id="file-name"
              value={fileName}
              onChange={(e) => setFileName(e.target.value)}
              className="block h-full w-full border border-[#707070] bg-white pr-5 pl-1 focus:outline-none"
            />
            <ChevronDown className="pointer-events-none absolute top-[5px] right-px h-4 w-4 text-[#555555]" strokeWidth={1.8} />
          </div>
          <div className="relative ml-3 h-[23px] w-[188px]">
            <select aria-label="File type" className="block h-full w-full appearance-none border border-[#adadad] bg-[#e1e1e1] pl-[3px]">
              <option>SVG Files (*.svg)</option>
            </select>
            <ChevronDown className="pointer-events-none absolute top-[4px] right-px h-4 w-4 text-[#555555]" strokeWidth={1.8} />
          </div>
        </div>
        <div className="flex justify-end gap-[14px] pr-px">
          <button type="button" className="h-6 w-[86px] border border-[#adadad] bg-[#e1e1e1]">Otwórz</button>
          <button type="button" className="h-6 w-[86px] border border-[#adadad] bg-[#e1e1e1]">Anuluj</button>
        </div>
        <svg viewBox="0 0 9 9" className="absolute right-[2px] bottom-[2px] h-[9px] w-[9px]" fill="#bdbdbd">
          <path d="M7 0H9V2H7ZM7 3H9V5H7ZM4 3H6V5H4ZM7 6H9V8H7ZM4 6H6V8H4ZM1 6H3V8H1Z" />
        </svg>
      </footer>
    </section>
  );
};

const Arrows = () => (
  <svg viewBox="0 0 1316 643" className="pointer-events-none absolute top-0 left-0 h-[643px] w-[1316px]" fill="#ff0000" stroke="#ff0000">
    <path d="M535 235L413 261M947 209L919 136M999 545L663 466" strokeWidth="3" />
    <path d="M400 264L414 256L416 265ZM914 124L923 136L914 139ZM651 463L667 462L665 470Z" strokeWidth="0" />
  </svg>
);

const menus = ['Edit', 'View', 'Setup', 'Tools', 'Help'];

const App = () => {
  return (
    <div className="relative flex h-screen w-full flex-col overflow-hidden bg-[#d6d6d6] font-['Liberation_Sans',Arial,sans-serif] text-black">
      <header className="flex h-6 shrink-0 items-center border-b border-[#8b8b8b] bg-white font-['Open_Sans',sans-serif] text-[12px] text-[#999999]">
        <h1 className="-ml-[3px] flex-1 whitespace-nowrap">Aurora 3D Animation Maker - [1]</h1>
        <div className="-mr-[17px] flex">
          <button type="button" aria-label="Minimize" className="flex w-[45px] justify-center">
            <svg viewBox="0 0 10 10" className="h-[10px] w-[10px]" stroke="#777777"><path d="M0 5.500H10" /></svg>
          </button>
          <button type="button" aria-label="Restore" className="flex w-[45px] justify-center">
            <svg viewBox="0 0 10 10" className="h-[10px] w-[10px]" fill="none" stroke="#777777"><path d="M.5 2.500H7.500V9.500H.5ZM2.500 2.500V.5H9.500V7.500H7.500" /></svg>
          </button>
          <button type="button" aria-label="Close" className="flex w-[45px] justify-center">
            <svg viewBox="0 0 10 10" className="h-[10px] w-[10px]" stroke="#777777"><path d="M0 0L10 10M10 0L0 10" /></svg>
          </button>
        </div>
      </header>

      <nav className="flex h-[22px] shrink-0 items-center gap-[13px] border-b border-[#8b8b8b] bg-linear-to-b from-[#dedede] to-[#d2d2d2] pl-[11px] text-[12px]">
        {menus.map((m) => (
          <button key={m} type="button">{m}</button>
        ))}
      </nav>
      <div className="h-px shrink-0" />
      <Toolbar />

      <main className="mt-[2px] flex min-h-0 flex-1">
        <div className="flex w-[11px] shrink-0 flex-col border-t border-r border-[#8b8b8b] pr-[3px]">
          <div className="mt-1 h-1 border-t border-r border-b border-[#777777]" />
          <div className="mt-[6px] h-7 border-2 border-l-0 border-white bg-linear-to-b from-[#dfe0e4] to-[#f4f5f8]" />
          <div className="h-px bg-[#777777]" />
          <div className="mt-[27px] h-px bg-[#777777]" />
          <div className="mt-[252px] h-px bg-[#777777]" />
          <div className="mt-[177px] h-px bg-[#777777]" />
        </div>
        <div className="ml-px flex min-w-0 flex-1 flex-col border-t border-l border-[#8b8b8b] pl-px">
          <div className="ml-[3px] flex min-h-0 flex-1 bg-[linear-gradient(#f8f8f8,#c8c8c8_260px)] pt-[3px]">
            <div className="ml-[178px] flex-1 bg-black" />
          </div>
          <div className="mt-[6px] h-4 shrink-0 border-t-2 border-[#9a9a9a] bg-linear-to-b from-[#e9e9e9] to-[#dadada]">
            <svg viewBox="0 0 250 14" className="h-[14px] w-[250px]" fontFamily="Liberation Sans, sans-serif" fontSize="12">
              <text x="2" y="11">0</text>
              <text x="162" y="11">1</text>
              <path d="M3 11H7V14H3Z" fill="#ff0000" />
              <path d="M85 13V14M165 11V14M245 13V14" stroke="#666666" strokeWidth="2" />
            </svg>
          </div>
        </div>
        <PropertyPanel />
      </main>

      <ShapeDialog />
      <FileDialog />
      <Arrows />
    </div>
  );
};

export default App;
